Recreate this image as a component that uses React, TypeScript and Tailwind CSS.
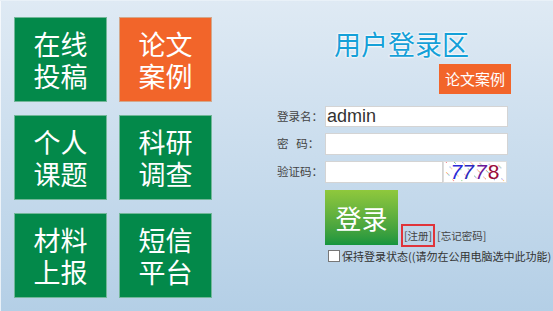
import React from 'react';

const TILES = [
  { top: '在线', bottom: '投稿', bg: 'bg-[#03894a]' },
  { top: '论文', bottom: '案例', bg: 'bg-[#f2652a]' },
  { top: '个人', bottom: '课题', bg: 'bg-[#03894a]' },
  { top: '科研', bottom: '调查', bg: 'bg-[#03894a]' },
  { top: '材料', bottom: '上报', bg: 'bg-[#03894a]' },
  { top: '短信', bottom: '平台', bg: 'bg-[#03894a]' },
];

const CJK = "font-['Noto_Sans_CJK_SC','Noto_Sans',sans-serif]";

function Captcha() {
  // noisy captcha image
  const dots = Array.from({ length: 70 }, (_, i) => ({
    x: (i * 37) % 64,
    y: (i * 53) % 21,
    c: ['#e23', '#3a3', '#36c', '#c6c', '#fa0'][i % 5],
  }));
  return (
    <svg width="64" height="22" viewBox="0 0 64 22" className="block bg-white border border-[#ddd]">
      {dots.map((d, i) => (
        <rect key={i} x={d.x} y={d.y} width="1" height="1" fill={d.c} opacity="0.7" />
      ))}
      <text x="5" y="19" fontSize="23" fontFamily="Liberation Sans, sans-serif" fontStyle="italic" fill="#2a2ad8">7</text>
      <text x="18" y="19" fontSize="23" fontFamily="Liberation Sans, sans-serif" fontStyle="italic" fill="#2d2ac0">7</text>
      <text x="32" y="19" fontSize="23" fontFamily="Liberation Sans, sans-serif" fontStyle="italic" fill="#6a1a9a">7</text>
      <text x="46" y="19" fontSize="23" fontFamily="Liberation Sans, sans-serif" fill="#9a0a3a">8</text>
    </svg>
  );
}

export default function App() {
  return (
    <div className={`w-[553px] h-[311px] flex bg-gradient-to-b from-[#dfeaf4] to-[#b4cfe6] border-t border-l border-white/70 ${CJK}`}>
      {/* Left tiles */}
      <div className="grid grid-cols-[93px_93px] gap-x-[12px] gap-y-[13px] pl-[13px] pt-[16px] content-start">
        {TILES.map((t) => (
          <div
            key={t.top}
            className={`${t.bg} h-[85px] border border-[#bcd6cf]/60 flex flex-col items-center justify-center text-white text-[27px] leading-[32px]`}
          >
            <span className="h-[32px] overflow-visible">{t.top}</span>
            <span className="h-[32px] overflow-visible">{t.bottom}</span>
          </div>
        ))}
      </div>

      {/* Right login panel */}
      <div className="flex-1 flex flex-col pl-[65px] pt-[29px]">
        <div className="pl-[57px] text-[27px] leading-[28px] text-[#15a0d8] [text-shadow:0_0_2px_#fff,0_0_2px_#fff,0_0_3px_#fff]">
          用户登录区
        </div>
        <div className="flex justify-end pr-[42px] mt-[6px]">
          <div className="w-[72px] h-[30px] bg-[#f2652a] text-white text-[15px] flex items-center justify-center">
            论文案例
          </div>
        </div>

        <div className="flex items-center mt-[12px] h-[21px]">
          <span className="w-[48px] text-[11.5px] text-[#444]">登录名：</span>
          <div className="w-[183px] h-[21px] bg-white border border-[#d4d4d4] flex items-center pl-[1px] text-[18px] text-[#333] font-['Liberation_Sans',sans-serif]">
            admin
          </div>
        </div>
        <div className="flex items-center mt-[6px] h-[22px]">
          <span className="w-[48px] text-[11.5px] text-[#444]">密&nbsp;&nbsp;&nbsp;码：</span>
          <div className="w-[183px] h-[22px] bg-white border border-[#d4d4d4]" />
        </div>
        <div className="flex items-center mt-[6px] h-[22px]">
          <span className="w-[48px] text-[11.5px] text-[#444]">验证码：</span>
          <div className="w-[118px] h-[22px] bg-white border border-[#d4d4d4]" />
          <Captcha />
        </div>

        <div className="flex items-end mt-[7px] pl-[48px]">
          <button className="w-[73px] h-[55px] bg-gradient-to-b from-[#8fc83c] to-[#13953e] text-white text-[26px] flex items-center justify-center">
            登录
          </button>
          <div className="flex items-center text-[10.5px] text-[#444] mb-[-2px]">
            <span className="ml-[3px] border-2 border-[#e0343a] px-[1px] h-[23px] flex items-center">[注册]</span>
            <span className="ml-[2px]">[忘记密码]</span>
          </div>
        </div>
        <div className="flex items-center mt-[3px] pl-[51px] text-[11px] text-[#333] whitespace-nowrap">
          <span className="w-[12px] h-[12px] bg-white border border-[#777] mr-[2px] shrink-0" />
          保持登录状态((请勿在公用电脑选中此功能)
        </div>
      </div>
    </div>
  );
}
